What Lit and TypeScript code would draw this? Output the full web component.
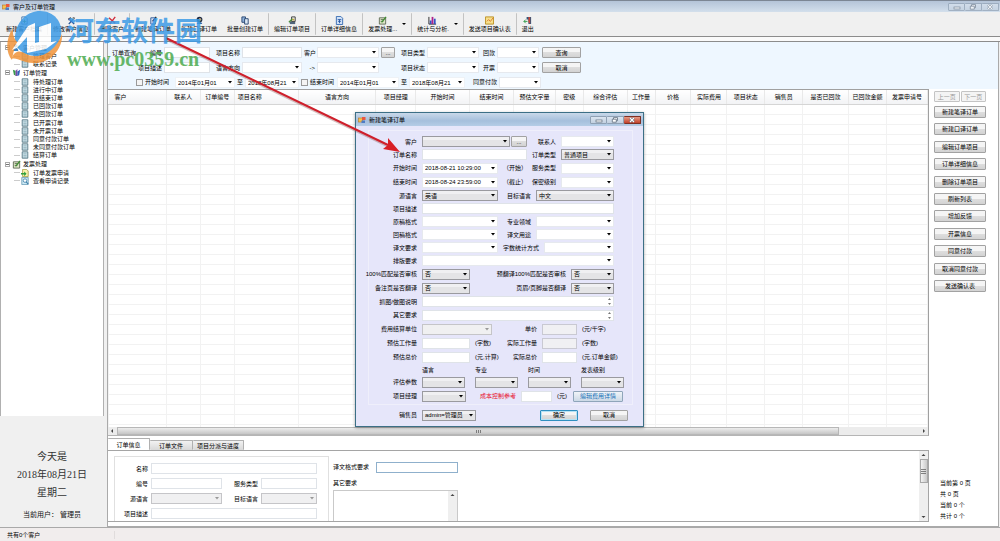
import { LitElement, html, css, svg, nothing } from "lit";
import { customElement } from "lit/decorators.js";

const controls = css`
  * { box-sizing: border-box; }
  :host { font: 6px/8px "Liberation Sans", "Noto Sans CJK SC", sans-serif; color: #000; }
  input, select, button, textarea { font: inherit; color: inherit; margin: 0; padding: 0 2px; border-radius: 0; outline: none; min-width: 0; }
  label, span, button { white-space: nowrap; }
  input, select { height: 11px; width: 100%; }
  input, textarea { border: 1px solid #dfe3e8; background: #fff; }
  textarea { display: block; width: 100%; resize: none; overflow: hidden; }
  select, .picker {
    appearance: none; border: 1px solid #e6e9ee; background-color: #fff;
    background-image: url("data:image/svg+xml,%3Csvg xmlns='http://www.w3.org/2000/svg' width='4' height='3'%3E%3Cpath d='M0 0h4L2 2.500z' fill='%23000'/%3E%3C/svg%3E");
    background-repeat: no-repeat; background-position: right 2px center;
  }
  select.raised { border: 1px solid #9a9a9f; background-color: #e4e4e6; box-shadow: inset 0 3px 0 #f0f0f2; }
  select.raised:disabled {
    border-color: #c5c5c8; background-color: #f0f0f1; box-shadow: none; opacity: 1;
    background-image: url("data:image/svg+xml,%3Csvg xmlns='http://www.w3.org/2000/svg' width='4' height='3'%3E%3Cpath d='M0 0h4L2 2.500z' fill='%23999'/%3E%3C/svg%3E");
  }
  input:disabled { background: #f0f0f3; border-color: #c9c9d2; }
  button { height: 11px; border: 1px solid #a2a2a2; border-radius: 1px; background: linear-gradient(#f5f5f5 45%, #dedede 50%, #d3d3d3); text-align: center; }
  button:disabled { color: #999; background: #f4f4f4; border-color: #c4c4c4; }
  input[type="checkbox"] { appearance: none; width: 7px; height: 7px; padding: 0; border: 1px solid #9a9a9a; background: #f4f4f4; }
`;

const formIcon = html`<svg class="app-icon" viewBox="0 0 8 8" aria-hidden="true">
  <rect x="0.500" y="2" width="4" height="4" fill="#f7c14b" stroke="#b7762b" stroke-width=".6"/>
  <rect x="4" y="1" width="3.500" height="3" fill="#e9573f"/>
  <rect x="3.500" y="4.500" width="3.500" height="2.500" fill="#4d7cc4"/></svg>`;

const winButtons = html`<div class="win">
  <button aria-label="最小化"><svg viewBox="0 0 8 6"><rect x="1" y="3" width="6" height="2" fill="#fff" stroke="#5d6b7b" stroke-width=".7"/></svg></button>
  <button aria-label="还原"><svg viewBox="0 0 8 6"><path d="M2.500 2V.6h4v3H5.500M1.300 2.200h4v3h-4z" fill="#fff" stroke="#5d6b7b" stroke-width=".8"/></svg></button>
  <button class="close" aria-label="关闭"><svg viewBox="0 0 8 6"><path d="M2 1l4 4M6 1L2 5" stroke="#5d6b7b" stroke-width="2.400"/><path d="M2 1l4 4M6 1L2 5" stroke="#fff" stroke-width="1.100"/></svg></button>
</div>`;

const winStyles = css`
  .app-icon { width: 8px; height: 8px; flex: none; }
  .win { display: flex; margin-left: auto; height: 8px; }
  .win button { width: 17px; height: 8px; padding: 0; display: grid; place-items: center; border-color: #8fa0b3; background: linear-gradient(#dbe5f0, #c2d0e0); }
  .win button + button { border-left: 0; }
  .win svg { width: 8px; height: 6px; display: block; }
`;

const label = (text: string, id: string) => html`<label class="lbl" for=${id}>${text}</label>`;
const combo = (id: string, value = "", cls = "", disabled = false) =>
  html`<select id=${id} class=${cls} ?disabled=${disabled}><option>${value}</option></select>`;
const text = (id: string, value = "", cls = "", disabled = false) =>
  html`<input id=${id} type="text" class=${cls} .value=${value} ?disabled=${disabled}>`;

@customElement("order-dialog")
class OrderDialog extends LitElement {
  static styles = [controls, winStyles, css`
    :host { display: block; border: 1px solid #3c6f86; background: #e6e6fa; box-shadow: 0 1px 3px #0005; }
    .bar { height: 13px; display: flex; align-items: center; gap: 3px; padding: 0 2px; background: linear-gradient(#c9d8e9, #a5bfdc 60%, #b4cce6); }
    .win .close { background: linear-gradient(#e79a84, #c2402a); border-color: #7d3024; }
    .group { margin: 4px 10px 0 12px; border: 1px solid #efeffb; padding: 4px 0 1px; }
    .rows { margin-left: -13px; }
    .row { display: grid; column-gap: 5px; height: 13px; align-items: center; }
    .row.tall { height: 14px; }
    .row.heads { height: 11px; }
    .lbl { text-align: right; }
    .pair { grid-template-columns: 61px 105px 24px 53px; }
    .date { grid-template-columns: 61px 76px 24px 24px 53px; }
    .half { grid-template-columns: 61px 76px 28px 78px; }
    .stat { grid-template-columns: 61px 76px 36px 70px; }
    .wide { grid-template-columns: 61px 192px; }
    .check { grid-template-columns: 61px 48px 91px 43px; }
    .unit { grid-template-columns: 61px 70px 40px 35px auto; }
    .load { grid-template-columns: 61px 48px 27px 30px 35px auto; }
    .rows .four { grid-template-columns: 56px repeat(4, 43px); column-gap: 10px; }
    .four .lbl { margin-right: -5px; }
    .four .lbl { padding-right: 0; }
    .cost { grid-template-columns: 61px 44px 45px 31px 11px 50px; }
    .foot { grid-template-columns: 61px 54px 54px 38px 38px; margin-top: 3px; }
    .foot .ok { grid-column: 4; border-color: #2f8fc0; box-shadow: inset 0 0 0 1px #b5e2f5; }
    .foot .no { margin-left: 7px; width: 38px; }
    .with-button { display: flex; gap: 1px; }
    .with-button button { flex: none; width: 16px; }
    .with-button select { flex: 1; }
    .memo { position: relative; }
    .memo textarea { height: 11px; }
    .spin { position: absolute; right: 2px; top: 1px; width: 5px; height: 9px; }
    .red { color: #e8112d; }
    .link { color: #1670b8; background: linear-gradient(#f0f4f8, #ccd9e6); border-color: #8fa5ba; }
  `];

  private memo(id: string) {
    return html`<div class="memo"><textarea id=${id}></textarea>
      <svg class="spin" viewBox="0 0 5 9" aria-hidden="true"><path d="M1 3l1.500-2L4 3zM1 6l1.500 2L4 6z" fill="#777"/></svg></div>`;
  }

  render() {
    return html`
      <div class="bar">${formIcon}<span>新建笔译订单</span>${winButtons}</div>
      <div class="group"><div class="rows">
        <div class="row pair">${label("客户", "cust")}<div class="with-button">${combo("cust", "", "raised")}<button>...</button></div>
          ${label("联系人", "contact")}${combo("contact")}</div>
        <div class="row pair">${label("订单名称", "name")}${text("name")}${label("订单类型", "kind")}${combo("kind", "普通项目", "raised")}</div>
        <div class="row tall date">${label("开始时间", "from")}${text("from", "2018-08-21 10:29:00", "picker")}<span>（开始）</span>
          ${label("服务类型", "service")}${combo("service")}</div>
        <div class="row tall date">${label("结束时间", "to")}${text("to", "2018-08-24 23:59:00", "picker")}<span>（截止）</span>
          ${label("保密级别", "secret")}${combo("secret")}</div>
        <div class="row half">${label("源语言", "src")}${combo("src", "英语", "raised")}${label("目标语言", "dst")}${combo("dst", "中文", "raised")}</div>
        <div class="row wide">${label("项目描述", "desc")}${text("desc")}</div>
        <div class="row half">${label("原稿格式", "fmt")}${combo("fmt")}${label("专业领域", "field")}${combo("field")}</div>
        <div class="row half">${label("回稿格式", "back")}${combo("back")}${label("译文用途", "use")}${combo("use")}</div>
        <div class="row stat">${label("译文要求", "req")}${combo("req")}${label("字数统计方式", "count")}${combo("count")}</div>
        <div class="row wide">${label("排版要求", "layout")}${combo("layout")}</div>
        <div class="row tall check">${label("100%匹配是否审核", "m1")}${combo("m1", "否", "raised")}${label("预翻译100%匹配是否审核", "m2")}${combo("m2", "否", "raised")}</div>
        <div class="row tall check">${label("备注页是否翻译", "n1")}${combo("n1", "否", "raised")}${label("页眉/页脚是否翻译", "n2")}${combo("n2", "否", "raised")}</div>
        <div class="row wide">${label("抓图/做图说明", "pic")}${this.memo("pic")}</div>
        <div class="row tall wide">${label("其它要求", "other")}${this.memo("other")}</div>
        <div class="row tall unit">${label("费用结算单位", "unit")}${combo("unit", "", "raised", true)}${label("单价", "price")}${text("price", "", "", true)}<span>(元/千字)</span></div>
        <div class="row tall load">${label("预估工作量", "w1")}${text("w1")}<span>(字数)</span>${label("实际工作量", "w2")}${text("w2", "", "", true)}<span>(字数)</span></div>
        <div class="row tall load">${label("预估总价", "t1")}${text("t1")}<span>(元,计算)</span>${label("实际总价", "t2")}${text("t2")}<span>(元,订单金额)</span></div>
        <div class="row heads four"><span></span>${["语言", "专业", "时间", "发表级别"].map((t, i) => html`<label for="p${i}">${t}</label>`)}</div>
        <div class="row tall four"><span class="lbl">评估参数</span>${[0, 1, 2, 3].map((i) => combo(`p${i}`, "", "raised"))}</div>
        <div class="row tall cost">${label("项目经理", "pm")}${combo("pm", "", "raised")}<label class="lbl red" for="cost">成本控制参考</label>${text("cost")}<span>(元)</span><button class="link">编辑费用详情</button></div>
      </div></div>
      <div class="row tall foot">${label("销售员", "sales")}${combo("sales", "admin=管理员", "raised")}<button class="ok">确定</button><button class="no">取消</button></div>
    `;
  }
}

const icons: Record<string, unknown> = {
  add: svg`<path d="M2 1h4l2 2v6H2z" fill="#e8f2fb" stroke="#3f76ad"/><path d="M5 4v4M3 6h4" stroke="#2f8a3c"/>`,
  tools: svg`<path d="M2 9l5-6M2 3l6 6" stroke="#2b5797" stroke-width="1.500"/><path d="M1 3l3-2 1 2-3 2zM6 1l3 1-1 2z" fill="#555"/>`,
  del: svg`<path d="M1 2l7 6" stroke="#d12a3a" stroke-width="1.500"/><path d="M8 1L2 9" stroke="#d12a3a" stroke-width="1.500"/>`,
  pen: svg`<path d="M2 2h5v7H2z" fill="#d7e5f5" stroke="#2b5797"/><path d="M8 1L4 6" stroke="#222" stroke-width="1.500"/>`,
  talk: svg`<circle cx="5" cy="4" r="3.200" fill="#1d2b45"/><path d="M2 9c0-3 6-3 6 0z" fill="#3268b0"/><circle cx="5.500" cy="4" r="1.400" fill="#f0b67f"/>`,
  copy: svg`<path d="M1 1h4v6H1z" fill="#8fb1da" stroke="#27456f"/><path d="M4 3h4v6H4z" fill="#dbe8f6" stroke="#27456f"/>`,
  edit: svg`<path d="M2 6h6v3H2z" fill="#51657c"/><path d="M4 1h4v5H4z" fill="#f3f3f3" stroke="#333"/><path d="M1 7l4-4" stroke="#4a8d3b" stroke-width="1.500"/><path d="M5 3h2v2H5z" fill="#c8a83a"/>`,
  info: svg`<path d="M1.500.5h5l2 2v7h-7z" fill="#cfe0f6" stroke="#3268b0"/><path d="M3 4h4M5 4v4M3.500 6h3" stroke="#2457a6"/>`,
  bill: svg`<path d="M1.500 2h7v7h-7z" fill="#dfe8c9" stroke="#5e6a55"/><path d="M3 4h4M3 6h3" stroke="#5e6a55"/><path d="M9 1L4 7" stroke="#3d8c2f" stroke-width="1.400"/>`,
  chart: svg`<path d="M1 1v8h8" stroke="#222" fill="none"/><path d="M2 5h2v4H2z" fill="#3353c4"/><path d="M4 1h2v8H4z" fill="#b0218b"/><path d="M6.500 3h2v6h-2z" fill="#3353c4"/>`,
  mail: svg`<path d="M.5 1h9v8h-9z" fill="#f7df8c" stroke="#b98d1d"/><path d="M2 6l2-2 2 2 3-4" stroke="#d8782b" fill="none"/>`,
  exit: svg`<path d="M4 1h5v8H6V4H4z" fill="#31587f"/><path d="M6 1h2v8L6 7z" fill="#c2473a"/><path d="M1 6h4M3 4L1 6l2 2" stroke="#2e9a46" fill="none"/>`,
  users: svg`<circle cx="4" cy="3" r="2" fill="#27639b"/><path d="M1 9c0-5 6-5 6 0z" fill="#3a86c8"/><circle cx="7" cy="4" r="1.500" fill="#5bb06a"/>`,
  orders: svg`<path d="M1 2l3 1v6L2 7z" fill="#3a9a4a"/><path d="M4 3l2-2v8H4z" fill="#7a4ba8"/><path d="M6 4l3-2-1 6-2 1z" fill="#2d62b5"/>`,
  doc: svg`<path d="M1.500 1h7v8h-7z" fill="#cfe3ea" stroke="#456a78"/><path d="M3 3.500h4M3 5.500h4M3 7.500h4" stroke="#6f97a5" stroke-width=".7"/>`,
  apply: svg`<path d="M2 .5h5l2 2v7H2z" fill="#fbf3b0" stroke="#a5983c"/><path d="M0 5h4V3l3 3-3 3V7H0z" fill="#2fa03e"/>`,
  find: svg`<path d="M1 .5h8v9H1z" fill="#cfeaf5" stroke="#6397b3"/><circle cx="5" cy="4.500" r="2.200" fill="#fff" stroke="#3d7fa8"/><path d="M6.500 6L9 9" stroke="#3d7fa8" stroke-width="1.300"/>`,
};
const icon = (name: string) => html`<svg class="ico" viewBox="0 0 10 10" fill="none" aria-hidden="true">${icons[name]}</svg>`;

const tools = [
  { t: "新建客户档案", i: "add" }, { t: "修改客户信息", i: "tools", sep: true }, { t: "删除客户", i: "del", sep: true },
  { t: "新建笔译订单", i: "pen", sep: true }, { t: "新建口译订单", i: "talk" }, { t: "批量创建订单", i: "copy" },
  { t: "编辑订单项目", i: "edit", sep: true }, { t: "订单详细信息", i: "info", sep: true },
  { t: "发票处理...", i: "bill", sep: true, drop: true }, { t: "统计与分析.", i: "chart", sep: true, drop: true },
  { t: "发送项目确认表", i: "mail", sep: true }, { t: "退出", i: "exit", sep: true },
];

const tree = [
  { t: "客户管理", i: "users", kids: [["管理客户", "doc"], ["联系记录", "doc"]] },
  { t: "订单管理", i: "orders", kids: ["待处理订单", "进行中订单", "已结束订单", "已回款订单", "未回款订单", "已开票订单", "未开票订单", "同意付款订单", "未同意付款订单", "结算订单"].map((t) => [t, "doc"]) },
  { t: "发票处理", i: "bill", kids: [["订单发票申请", "apply"], ["查看申请记录", "find"]] },
];

const columns: [string, number][] = [
  ["客户", 58], ["联系人", 34], ["订单编号", 34], ["项目名称", 64], ["语言方向", 78], ["项目经理", 40], ["开始时间", 54],
  ["结束时间", 44], ["预估文字量", 42], ["密级", 28], ["综合评估", 44], ["工作量", 28], ["价格", 36], ["实际费用", 36],
  ["项目状态", 38], ["销售员", 38], ["是否已回款", 46], ["已回款金额", 38], ["发票申请号", 41],
];
const total = columns.reduce((s, c) => s + c[1], 0);

const actions = ["新建笔译订单", "新建口译订单", "编辑订单项目", "订单详细信息", "删除订单项目", "刷新列表", "增加反馈", "开票信息", "同意付款", "取消同意付款", "发送确认表"];

@customElement("app-root")
class AppRoot extends LitElement {
  static styles = [controls, winStyles, css`
    :host { display: flex; flex-direction: column; height: 100vh; position: relative; overflow: hidden; background: #f0f0f0; }
    .ico { width: 9px; height: 9px; display: block; flex: none; }
    .title { height: 12px; flex: none; display: flex; align-items: center; gap: 3px; padding: 0 1px 0 2px; border-top: 1px solid #7c8694; background: linear-gradient(#b4c4d8, #d3dfec); }
    .win { opacity: .7; }
    .tools { height: 25px; flex: none; display: flex; padding: 1px; border-bottom: 1px solid #8c8c8c; }
    .tools button { height: 22px; border: 0; background: none; padding: 0 5px; display: flex; align-items: center; gap: 5px; }
    .tools .sep { border-left: 1px solid #c3c3c3; }
    .face { display: flex; flex-direction: column; align-items: center; }
    .down { width: 4px; height: 2px; }
    .strip { height: 5px; flex: none; background: #fafafa; border-bottom: 1px solid #8c8c8c; }
    .body { flex: 1; min-height: 0; display: grid; grid-template-columns: 104px 1fr; column-gap: 3px; border-bottom: 1px solid #a9a9a9; }
    .side { display: flex; flex-direction: column; }
    .nav { flex: 1; background: #fff; border: 1px solid #b0b0b0; border-width: 0 1px; padding-top: 1px; }
    .tree { list-style: none; margin: 0; padding: 0 0 0 4px; height: 142px; display: grid; grid-auto-rows: 1fr; }
    .node { display: flex; align-items: center; gap: 2px; }
    .node.child { padding-left: 17px; gap: 4px; }
    .node.child .ico { width: 8px; height: 8px; }
    .child::before { content: ""; width: 6px; height: 1px; margin-left: -8px; margin-right: -3px; background: #ccc; }
    .box { width: 5px; height: 5px; border: 1px solid #aaa; background: linear-gradient(#777, #777) center / 3px 1px no-repeat; flex: none; }
    .today { height: 111px; display: flex; flex-direction: column; align-items: center; padding-top: 32px; font: 10px/18px "Liberation Serif", "Noto Sans CJK SC", serif; color: #333; }
    .today .user { font: 7px/10px "Liberation Sans", "Noto Sans CJK SC", sans-serif; margin-top: 8px; color: #111; }
    .main { display: flex; flex-direction: column; min-width: 0; min-height: 0; background: #fff; border: 1px solid #aaa; border-top: 0; margin-right: 1px; }
    .search { flex: none; height: 47px; background: #eef7ff; padding-top: 4px; display: flex; flex-direction: column; gap: 1px; }
    .line { display: grid; column-gap: 2px; height: 14px; align-items: center; grid-template-columns: 54px 46px 28px 60px 11px 62px 14px 28px 52px 14px 42px 40px; }
    .line .lbl { text-align: right; }
    .line button { padding: 0; }
    .line .go { margin-left: 1px; width: 39px; }
    .first { display: flex; justify-content: space-between; padding-left: 4px; }
    .times { grid-template-columns: 7px 28px 60px 6px 54px 7px 25px 62px 6px 56px 30px 42px; padding-left: 28px; }
    .times .picker { border-color: #eef2f6; }
    .cols { flex: 1; min-height: 0; display: grid; grid-template-columns: 1fr 69px; }
    .left { display: flex; flex-direction: column; min-width: 0; min-height: 0; }
    .sheet { flex: 1; min-height: 0; overflow: hidden; border: 1px solid #a0a0a0; border-left: 0; border-bottom: 0; }
    table { width: 100%; table-layout: fixed; border-collapse: collapse; }
    th { height: 14px; padding: 0; font-weight: normal; white-space: nowrap; text-align: center; background: linear-gradient(#fff, #f2f3f5); border-right: 1px solid #e9e9e9; border-bottom: 1px solid #d5d5d5; }
    th.start { text-align: left; padding-left: 3px; }
    th.start:first-child { padding-left: 6px; }
    td { height: 10px; padding: 0; border: 1px solid #f2f2f2; }
    .hbar { height: 9px; flex: none; display: flex; align-items: center; background: #ececec; border-right: 1px solid #a0a0a0; border-bottom: 1px solid #b5b5b5; }
    .arr { width: 9px; height: 8px; flex: none; }
    .hthumb { flex: 9; height: 8px; background: linear-gradient(#ededed, #c6c6c6); border: 1px solid #b7b7b7; display: grid; place-items: center; }
    .htrack { flex: 1; }
    .grip { width: 5px; height: 5px; }
    .tabs { display: flex; flex: none; margin-top: 2px; height: 12px; align-items: flex-end; }
    .tabs button { height: 10px; padding: 0 4px; border-color: #b0b0b0; border-bottom: 0; background: linear-gradient(#f2f2f2, #d8d8d8); border-left: 0; }
    .tabs .on { height: 12px; background: #fff; width: 42px; }
    .tabs .file { width: 43px; }
    .panel { flex: none; height: 72px; margin-bottom: 4px; border: 1px solid #a5a5a5; border-left: 0; display: flex; overflow: hidden; }
    .box1 { width: 215px; margin: 5px 0 0 6px; border: 1px solid #e0e0e0; border-bottom: 0; padding-top: 4px; }
    .prow { display: grid; grid-template-columns: 33px 71px 33px 56px; column-gap: 3px; height: 15px; align-items: center; }
    .prow .lbl { text-align: right; }
    .prow .span { grid-column: 2 / 5; }
    .box2 { padding: 10px 0 0 4px; width: 130px; display: flex; flex-direction: column; }
    .fmt { display: flex; align-items: center; gap: 4px; height: 12px; }
    .fmt input { width: 82px; border-color: #8fb0cc; margin-left: auto; margin-right: 1px; }
    .other { height: 17px; padding-top: 6px; }
    .memo { flex: 1; display: flex; border: 1px solid #c9c9c9; border-bottom: 0; margin-right: 1px; }
    .memo textarea { border: 0; height: 100%; }
    .mbar { width: 9px; background: #efefef; flex: none; }
    .vbar { margin-left: auto; width: 9px; background: #efefef; display: flex; flex-direction: column; align-items: center; }
    .vthumb { width: 8px; height: 24px; border: 1px solid #a8a8a8; background: linear-gradient(90deg, #f3f3f3, #c9c9c9); display: grid; place-items: center; }
    .vspace { flex: 1; }
    .right { padding: 2px 12px 4px 5px; display: flex; flex-direction: column; }
    .pager { display: grid; grid-template-columns: 1fr 1fr; gap: 1px; }
    .pager button { padding: 0; }
    .acts { height: 186px; margin-top: 4px; display: flex; flex-direction: column; justify-content: space-between; }
    .acts button { padding: 0; height: 12px; }
    .sum { margin-top: auto; padding-left: 6px; line-height: 11px; white-space: nowrap; }
    .status { height: 13px; flex: none; display: flex; align-items: center; background: #f1eded; }
    .status span { width: 115px; padding-left: 7px; border-right: 1px solid #e0dcdc; }
    .dialog { position: absolute; left: 355px; top: 112px; width: 289px; height: 315px; }
    .arrow { position: absolute; left: 160px; top: 30px; width: 250px; height: 130px; pointer-events: none; }
    .mark { position: absolute; left: 4px; top: 10px; display: flex; gap: 3px; opacity: .85; pointer-events: none; }
    .logo { width: 60px; height: 54px; }
    .words { display: flex; flex-direction: column; padding-top: 4px; }
    .cn { font: 700 27px/32px "Noto Sans CJK SC", sans-serif; color: #3d9be6; }
    .url { font: 700 20px/22px "Liberation Serif", serif; color: #4dab50; margin-top: 2px; }
  `];

  private grid() {
    return html`<div class="sheet"><table>
      <colgroup>${columns.map((c) => html`<col style="width:${(c[1] / total) * 100}%">`)}</colgroup>
      <thead><tr>${columns.map(([t]) => html`<th class=${t === "客户" || t === "项目名称" ? "start" : ""}>${t}</th>`)}</tr></thead>
      <tbody>${Array.from({ length: 33 }, () => html`<tr>${columns.map(() => html`<td></td>`)}</tr>`)}</tbody>
    </table></div>`;
  }

  private arr(d: string) {
    return html`<svg class="arr" viewBox="0 0 9 8" aria-hidden="true"><path d=${d} fill="#444"/></svg>`;
  }

  private search() {
    return html`<div class="search">
      <div class="line">
        <div class="first"><span>订单查询</span>${label("编号", "s-no")}</div>${text("s-no")}
        ${label("项目名称", "s-name")}${text("s-name")}${label("客户", "s-cust")}${combo("s-cust")}<button>...</button>
        ${label("项目类型", "s-type")}${combo("s-type")}${label("回款", "s-pay")}${combo("s-pay")}<button class="go">查询</button>
      </div>
      <div class="line">
        ${label("项目描述", "s-desc")}${text("s-desc")}${label("语言方向", "s-src")}${combo("s-src")}
        <label class="lbl" for="s-dst">-&gt;</label>${combo("s-dst")}<span></span>
        ${label("项目状态", "s-state")}${combo("s-state")}${label("开票", "s-bill")}${combo("s-bill")}<button class="go">取消</button>
      </div>
      <div class="line times">
        <input type="checkbox" id="c1"><label for="c1">开始时间</label>
        <input type="text" class="picker" aria-label="开始时间" .value=${"2014年01月01"}><label for="d1">至</label>${text("d1", "2018年08月21", "picker")}
        <input type="checkbox" id="c2"><label for="c2">结束时间</label>
        <input type="text" class="picker" aria-label="结束时间" .value=${"2014年01月01"}><label for="d2">至</label>${text("d2", "2018年08月21", "picker")}
        ${label("同意付款", "s-agree")}${combo("s-agree")}
      </div>
    </div>`;
  }

  private details() {
    return html`<div class="tabs"><button class="on">订单信息</button><button class="file">订单文件</button><button>项目分派与进度</button></div>
      <div class="panel">
        <div class="box1">
          <div class="prow">${label("名称", "o-name")}${text("o-name", "", "span")}</div>
          <div class="prow">${label("编号", "o-no")}${text("o-no")}${label("服务类型", "o-svc")}${text("o-svc")}</div>
          <div class="prow">${label("源语言", "o-src")}${combo("o-src", "", "raised", true)}${label("目标语言", "o-dst")}${combo("o-dst", "", "raised", true)}</div>
          <div class="prow">${label("项目描述", "o-desc")}${text("o-desc", "", "span")}</div>
        </div>
        <div class="box2">
          <div class="fmt">${label("译文格式要求", "o-fmt")}${text("o-fmt")}</div>
          <label class="other" for="o-other">其它要求</label>
          <div class="memo"><textarea id="o-other"></textarea><div class="mbar">${this.arr("M2.500 5l2-2 2 2z")}</div></div>
        </div>
        <div class="vbar">${this.arr("M2.500 5l2-2 2 2z")}<div class="vthumb"><svg class="grip" viewBox="0 0 5 5"><path d="M0 .5h5M0 2.500h5M0 4.500h5" stroke="#666" stroke-width=".8"/></svg></div><div class="vspace"></div>${this.arr("M2.500 3l2 2 2-2z")}</div>
      </div>`;
  }

  render() {
    return html`
      <div class="title">${formIcon}<span>客户及订单管理</span>${winButtons}</div>
      <div class="tools">${tools.map((b) => html`<button class=${b.sep ? "sep" : ""}>
        <span class="face">${icon(b.i)}<span>${b.t}</span></span>
        ${b.drop ? html`<svg class="down" viewBox="0 0 4 2"><path d="M0 0h4L2 2z"/></svg>` : nothing}</button>`)}</div>
      <div class="strip"></div>
      <div class="body">
        <div class="side">
          <div class="nav"><ul class="tree">${tree.map((g) => html`
            <li class="node"><i class="box"></i>${icon(g.i)}<span>${g.t}</span></li>
            ${g.kids.map(([t, i]) => html`<li class="node child">${icon(i)}<span>${t}</span></li>`)}`)}</ul></div>
          <div class="today"><span>今天是</span><span>2018年08月21日</span><span>星期二</span><span class="user">当前用户： 管理员</span></div>
        </div>
        <div class="main">
          ${this.search()}
          <div class="cols">
            <div class="left">
              ${this.grid()}
              <div class="hbar">${this.arr("M5 2L3 4l2 2z")}<div class="hthumb"><svg class="grip" viewBox="0 0 5 5"><path d="M.5 1v3M2.500 1v3M4.500 1v3" stroke="#666" stroke-width=".8"/></svg></div><div class="htrack"></div>${this.arr("M4 2l2 2-2 2z")}</div>
              ${this.details()}
            </div>
            <div class="right">
              <div class="pager"><button disabled>上一页</button><button disabled>下一页</button></div>
              <div class="acts">${actions.map((t) => html`<button>${t}</button>`)}</div>
              <div class="sum"><div>当前第 0 页</div><div>共 0 页</div><div>当前 0 个</div><div>共计 0 个</div></div>
            </div>
          </div>
        </div>
      </div>
      <div class="status"><span>共有0个客户</span></div>
      <order-dialog class="dialog"></order-dialog>
      <svg class="arrow" viewBox="0 0 250 130" aria-hidden="true">
        <path d="M6 9L230 117" stroke="#8a4a4a" stroke-opacity=".35" stroke-width="3"/>
        <path d="M6 8L228 115" stroke="#cf1f2b" stroke-width="2"/>
        <path d="M240 122L223 119L228 115L228 108Z" fill="#d81f26"/></svg>
      <div class="mark">
        <svg class="logo" viewBox="0 0 60 54" aria-hidden="true">
          <path d="M11 26C13 10 24 1 36 1C50 1 59 12 57 25C54 42 36 50 22 44C15 41 10 36 11 26Z" fill="#3d9be6"/>
          <path d="M9 18C1 30 2 43 8 50C9 42 11 36 14 33C10 29 8 24 9 18Z" fill="#f0943a"/>
          <path d="M7 49C11 40 16 40 22 44C36 51 52 41 58 24C59 40 45 54 29 53C18 53 14 47 7 49Z" fill="#f0943a"/>
          <path d="M8 40L24 16L31 13L31 33L35 32L35 17L47 13L47 32L53 31L42 39L23 43L23 27L13 38Z" fill="#fff"/>
        </svg>
        <div class="words"><span class="cn">河东软件园</span><span class="url">www.pc0359.cn</span></div>
      </div>
    `;
  }
}
